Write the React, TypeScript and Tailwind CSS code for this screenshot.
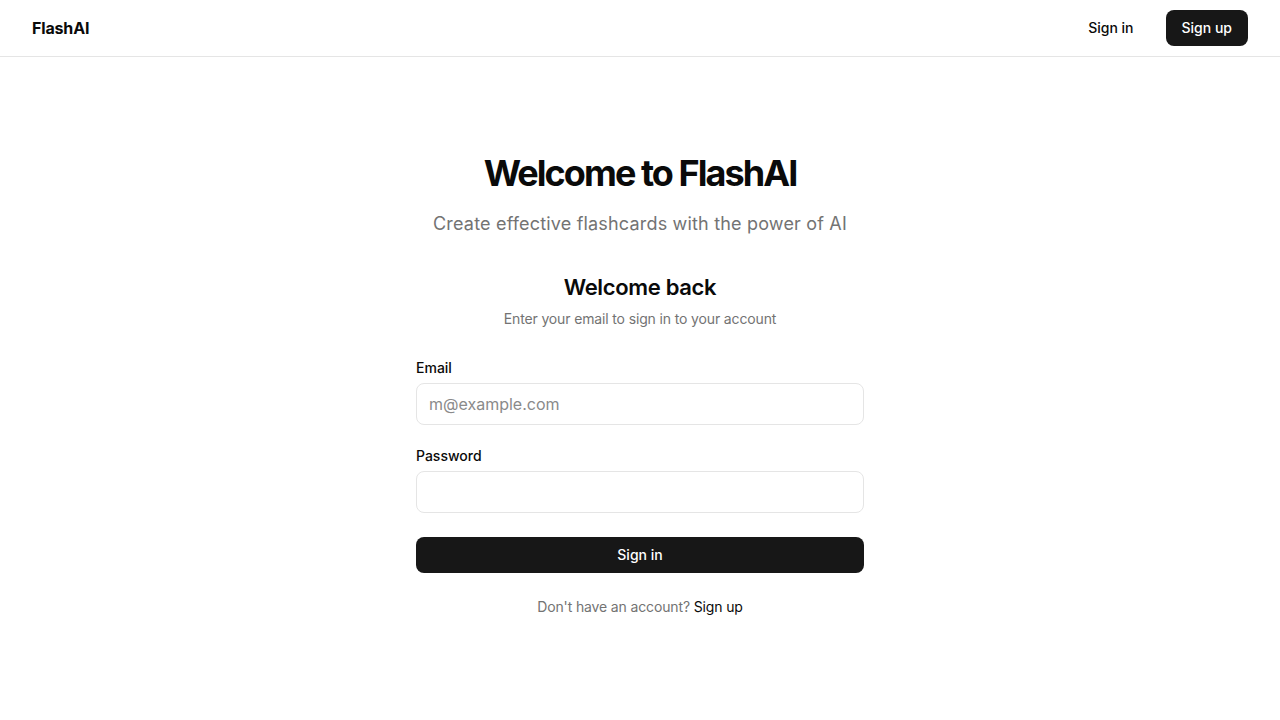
import React from 'react';

export default function App() {
  return (
    <div className="min-h-screen bg-white text-[#0a0a0a]" style={{ fontFamily: 'Inter, "Noto Sans", sans-serif' }}>
      <header className="h-[57px] border-b border-[#e5e5e5] flex items-center justify-between px-8">
        <span className="text-base font-bold tracking-[-0.01em]">FlashAI</span>
        <div className="flex items-center gap-4">
          <button className="h-9 px-4 text-sm font-medium rounded-lg">Sign in</button>
          <button className="h-9 px-4 text-sm font-medium rounded-lg bg-[#171717] text-white">Sign up</button>
        </div>
      </header>

      <main className="flex flex-col items-center pt-24">
        <h1 className="text-4xl font-bold tracking-[-0.054em]">Welcome to FlashAI</h1>
        <p className="mt-[17px] text-lg leading-7 tracking-[0.01em] text-[#737373]">
          Create effective flashcards with the power of AI
        </p>

        <div className="mt-[33px] w-[448px] flex flex-col">
          <h2 className="text-[22px] leading-8 font-semibold tracking-[-0.015em] text-center">Welcome back</h2>
          <p className="mt-1.5 text-sm tracking-[-0.01em] text-[#737373] text-center">
            Enter your email to sign in to your account
          </p>

          <form className="mt-[32px] flex flex-col gap-6" onSubmit={(e) => e.preventDefault()}>
            <div className="flex flex-col gap-2">
              <label className="text-sm font-medium leading-none">Email</label>
              <input
                type="email"
                placeholder="m@example.com"
                className="h-[42px] w-full rounded-lg border border-[#e5e5e5] px-3 text-base placeholder:text-[#8a8a8a] outline-none"
              />
            </div>
            <div className="flex flex-col gap-2">
              <label className="text-sm font-medium leading-none">Password</label>
              <input
                type="password"
                className="h-[42px] w-full rounded-lg border border-[#e5e5e5] px-3 text-base outline-none"
              />
            </div>
            <button type="submit" className="h-9 w-full rounded-lg bg-[#171717] text-white text-sm font-medium">
              Sign in
            </button>
          </form>

          <p className="mt-6 text-sm tracking-[-0.01em] text-center text-[#737373]">
            Don't have an account? <a className="text-[#0a0a0a]">Sign up</a>
          </p>
        </div>
      </main>
    </div>
  );
}
